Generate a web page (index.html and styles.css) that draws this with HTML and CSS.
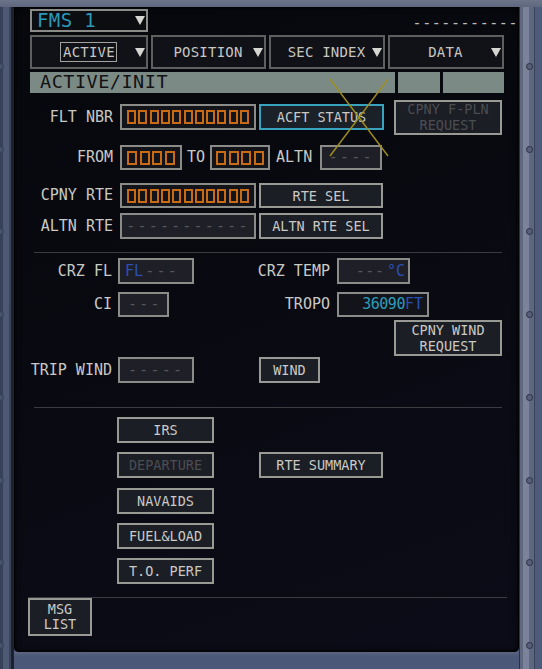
FILE: index.html
```html
<!DOCTYPE html>
<html lang="en">
<head>
<meta charset="utf-8">
<title>FMS ACTIVE/INIT</title>
<link rel="stylesheet" href="styles.css">
</head>
<body>
<div class="device">
  <div class="screws screws-left"><i></i><i></i><i></i><i></i><i></i><i></i><i></i><i></i></div>
  <div class="screws screws-right"><i></i><i></i><i></i><i></i><i></i><i></i><i></i><i></i></div>
  <div class="screen">
    <div class="hdr">
      <div class="fms"><span>FMS 1</span><span class="tri"></span></div>
      <div class="topdash">-----------</div>
    </div>

    <div class="tabs">
      <div class="tab t1"><span class="tl boxed">ACTIVE</span><span class="tri"></span></div>
      <div class="tab t2"><span class="tl">POSITION</span><span class="tri"></span></div>
      <div class="tab t3"><span class="tl">SEC INDEX</span><span class="tri"></span></div>
      <div class="tab t4"><span class="tl">DATA</span><span class="tri"></span></div>
    </div>

    <div class="titlebar">
      <div class="title">ACTIVE/INIT</div>
      <div class="tb2"></div>
      <div class="tb3"></div>
    </div>

    <div class="row r-flt">
      <div class="lbl">FLT NBR</div>
      <div class="fld f-flt"><i class="sq"></i><i class="sq"></i><i class="sq"></i><i class="sq"></i><i class="sq"></i><i class="sq"></i><i class="sq"></i><i class="sq"></i><i class="sq"></i><i class="sq"></i><i class="sq"></i></div>
      <div class="btn sel b-acft">ACFT STATUS</div>
      <div class="btn dis b-fpln">CPNY F-PLN<br>REQUEST</div>
    </div>

    <div class="row r-from">
      <div class="lbl">FROM</div>
      <div class="fld f-from"><i class="sq sq4"></i><i class="sq sq4"></i><i class="sq sq4"></i><i class="sq sq4"></i></div>
      <div class="ilbl l-to">TO</div>
      <div class="fld f-to"><i class="sq sq4"></i><i class="sq sq4"></i><i class="sq sq4"></i><i class="sq sq4"></i></div>
      <div class="ilbl l-altn">ALTN</div>
      <div class="fld dash f-altn">----</div>
    </div>

    <div class="row r-cpny">
      <div class="lbl">CPNY RTE</div>
      <div class="fld f-flt"><i class="sq"></i><i class="sq"></i><i class="sq"></i><i class="sq"></i><i class="sq"></i><i class="sq"></i><i class="sq"></i><i class="sq"></i><i class="sq"></i><i class="sq"></i><i class="sq"></i></div>
      <div class="btn b-rte">RTE SEL</div>
    </div>

    <div class="row r-altnrte">
      <div class="lbl">ALTN RTE</div>
      <div class="fld dash f-flt">-----------</div>
      <div class="btn b-rte">ALTN RTE SEL</div>
    </div>

    <div class="sep"></div>

    <div class="row r-crz">
      <div class="lbl lbl2">CRZ FL</div>
      <div class="fld dash f-crzfl"><span class="blue">FL</span>---</div>
      <div class="rlbl">CRZ TEMP</div>
      <div class="fld dash f-temp">---<span class="blue">°C</span></div>
    </div>

    <div class="row r-ci">
      <div class="lbl lbl2">CI</div>
      <div class="fld dash f-ci">---</div>
      <div class="rlbl rlbl-ci">TROPO</div>
      <div class="fld f-tropo"><span class="cyan">36090</span><span class="blue">FT</span></div>
    </div>

    <div class="row r-wreq">
      <div class="btn b-wreq">CPNY WIND<br>REQUEST</div>
    </div>

    <div class="row r-trip">
      <div class="lbl lbl2">TRIP WIND</div>
      <div class="fld dash f-crzfl f-trip">-----</div>
      <div class="btn b-wind">WIND</div>
    </div>

    <div class="sep sep2"></div>

    <div class="lower">
      <div class="col">
        <div class="btn b-col">IRS</div>
        <div class="btn dis b-col">DEPARTURE</div>
        <div class="btn b-col">NAVAIDS</div>
        <div class="btn b-col">FUEL&amp;LOAD</div>
        <div class="btn b-col">T.O. PERF</div>
      </div>
      <div class="btn b-sum">RTE SUMMARY</div>
    </div>

    <div class="sep sep3"></div>
    <div class="btn b-msg">MSG<br>LIST</div>

    <svg class="xmark" width="60" height="78" viewBox="0 0 60 78">
      <line x1="1" y1="0" x2="59" y2="77" stroke="#a08e1e" stroke-width="1.4"/>
      <line x1="59" y1="0" x2="1" y2="77" stroke="#a08e1e" stroke-width="1.4"/>
    </svg>
  </div>
</div>
</body>
</html>
```

FILE: styles.css
```css
* { box-sizing: border-box; margin: 0; padding: 0; }
html, body { width: 542px; height: 669px; overflow: hidden; }
body {
  background: #4c5877;
  font-family: "DejaVu Sans Mono", monospace;
  color: #c9c9c5;
  line-height: 1;
}

.device {
  position: relative;
  width: 542px;
  height: 669px;
  padding: 7px 23px 17px 14px;
  background:
    linear-gradient(#6b7489, #5e677d) left top / 100% 7px no-repeat,
    linear-gradient(to right, #37425a 0 3px, #4e5a74 3px 9px, #3a4459 9px 11px, #1c2130 11px 14px) left top / 14px 100% no-repeat,
    linear-gradient(to right, #2b3142 0 1px, #5f6880 1px 4px, #7a8399 4px 10px, #5d6780 10px 15px, #394259 15px 16px, #4e5b7a 16px) right top / 23px 100% no-repeat,
    linear-gradient(#5c6682, #4c5877 4px) left bottom / 100% 17px no-repeat,
    #4c5877;
}

.screws {
  position: absolute;
  top: 63px;
  height: 586px;
  width: 7px;
  display: flex;
  flex-direction: column;
  justify-content: space-between;
}
.screws-left { left: -3px; }
.screws-right { left: 526px; }
.screws i {
  display: block;
  width: 7px;
  height: 7px;
  border-radius: 50%;
  border: 1px solid #2a3040;
  background: #56607a;
}
.screws-left i { border-color: #343c50; background: #46516b; }

.screen {
  position: relative;
  height: 100%;
  background: linear-gradient(160deg, #07080c, #0b0c17);
  border-radius: 0 0 5px 5px;
  padding: 2px 0 0 16px;
  box-shadow: inset 0 0 0 1px #030304, inset 0 0 6px #020203;
}

/* header */
.hdr { display: flex; height: 23px; align-items: center; }
.fms {
  width: 118px;
  height: 23px;
  border: 2px solid #8b8b88;
  background: #0c0d11;
  display: flex;
  align-items: center;
  justify-content: space-between;
  padding: 0 1px 0 5px;
  color: #2a9ab8;
  font-size: 19px;
  letter-spacing: 0.4px;
}
.tri {
  display: block;
  width: 0;
  height: 0;
  border-left: 5.5px solid transparent;
  border-right: 5.5px solid transparent;
  border-top: 9px solid #d5d5d2;
}
.topdash {
  margin-left: auto;
  margin-top: 6px;
  margin-right: 1px;
  font-size: 15px;
  letter-spacing: 0.55px;
  color: #bdbdbb;
}

/* tabs */
.tabs { display: flex; gap: 3px; margin-top: 3px; height: 34px; }
.tab {
  height: 34px;
  border: 2px solid #5e5f5f;
  background: #111217;
  display: grid;
  grid-template-columns: 1fr auto 1fr;
  align-items: center;
  font-size: 14px;
  letter-spacing: 0.2px;
  color: #c6c6c3;
  padding-right: 1px;
}
.tab .tl { grid-column: 2; }
.tab .tri { grid-column: 3; justify-self: end; }
.t1 { width: 118px; }
.t2 { width: 115px; }
.t3, .t4 { width: 116px; }
.boxed { border: 1.5px solid #a2a29e; padding: 2px 1px 2px 2px; }

/* title bar */
.titlebar { display: flex; gap: 3px; margin-top: 3px; height: 21px; }
.title, .tb2, .tb3 { background: #7c8a86; }
.title {
  width: 365px;
  color: #111213;
  font-size: 18.5px;
  letter-spacing: 0.5px;
  padding-left: 10px;
  display: flex;
  align-items: center;
}
.tb2 { width: 42px; }
.tb3 { width: 61px; }

/* rows */
.row { display: flex; align-items: center; }
.lbl {
  flex: none;
  width: 83px;
  margin-right: 7px;
  text-align: right;
  font-size: 15px;
}
.lbl2 { width: 82px; margin-right: 6px; }
.ilbl { font-size: 15px; flex: none; }
.l-to { margin: 0 5px; }
.l-altn { margin: 0 8px 0 6px; }
.rlbl { flex: none; font-size: 15px; text-align: right; width: 136px; margin-right: 7px; }
.rlbl-ci { width: 161px; }

.fld {
  flex: none;
  height: 100%;
  border: 2px solid #8b8b88;
  background: #131419;
  display: flex;
  align-items: center;
  justify-content: center;
  gap: 2.3px;
}
.fld.dash {
  background: #1f2027;
  color: #55575d;
  font-size: 15px;
  letter-spacing: 2.2px;
}
.sq {
  display: block;
  width: 9px;
  height: 14px;
  border: 2px solid #c96a14;
}
.sq4 { width: 10px; }

.blue { color: #2c4fb5; letter-spacing: 0; }
.cyan { color: #2b9cbc; }

.btn {
  flex: none;
  border: 2px solid #9a9a95;
  background: #1c1e25;
  display: flex;
  align-items: center;
  justify-content: center;
  text-align: center;
  font-size: 13.5px;
  line-height: 16px;
  color: #c9c9c5;
}
.btn.sel { border-color: #38a2bf; background: #1b2129; }
.btn.dis { color: #4b4d52; }

.r-flt { margin-top: 11px; height: 26px; }
.f-flt { width: 136px; }
.b-acft { width: 125px; height: 100%; margin-left: 3px; }
.b-fpln { width: 108px; height: 35px; margin-left: 10px; }

.r-from { margin-top: 15px; height: 25px; }
.f-from { width: 62px; gap: 2.6px; }
.f-to { width: 60px; gap: 2.6px; }
.f-altn { width: 62px; }

.r-cpny { margin-top: 13px; height: 25px; }
.r-altnrte { margin-top: 5px; height: 26px; }
.b-rte { width: 124px; height: 100%; margin-left: 3px; }

.sep { height: 1px; background: #3b3c42; margin: 13px 0 0 4px; width: 468px; }

.r-crz { margin-top: 5px; height: 26px; }
.f-crzfl { width: 76px; justify-content: flex-start; padding-left: 5px; }
.fld.f-temp { width: 73px; justify-content: flex-end; padding-right: 3px; letter-spacing: 0.6px; }

.r-ci { margin-top: 8px; height: 25px; }
.f-ci { width: 51px; justify-content: flex-start; padding-left: 8px; }
.f-tropo {
  width: 92px;
  justify-content: flex-end;
  padding-right: 4px;
  font-size: 15px;
  letter-spacing: -0.5px;
  gap: 0;
}

.r-wreq { margin-top: 3px; height: 36px; }
.b-wreq { width: 108px; height: 36px; margin-left: 364px; }

.r-trip { margin-top: 1px; height: 26px; }
.f-trip { padding-left: 8px; }
.b-wind { width: 61px; height: 100%; margin-left: 65px; }

.sep2 { margin-top: 24px; }

.lower { display: flex; margin-top: 9px; }
.col {
  display: flex;
  flex-direction: column;
  gap: 9.25px;
  width: 97px;
  margin-left: 87px;
}
.b-col { height: 26px; }
.b-sum { width: 124px; height: 26px; margin-left: 45px; margin-top: 35.25px; }

.sep3 { margin: 13px 0 0 -2px; width: 479px; }
.b-msg { width: 64px; height: 38px; margin-left: -2px; line-height: 15px; }

.xmark { position: absolute; left: 315px; top: 72px; }
```
